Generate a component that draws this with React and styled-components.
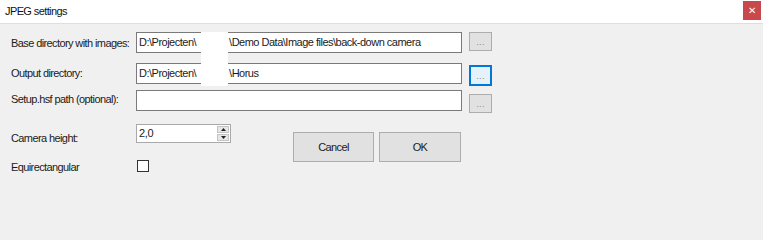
import React from "react";
import styled, { createGlobalStyle } from "styled-components";

const GlobalStyle = createGlobalStyle`
  html, body {
    margin: 0;
    padding: 0;
    background: #f0f0f0;
  }
  body {
    font-family: "Liberation Sans", Arial, sans-serif;
    font-size: 11px;
    letter-spacing: -0.6px;
    color: #1b1b1b;
  }
`;

const Window = styled.div`
  position: relative;
  width: 763px;
  height: 217px;
  background: #f0f0f0;
  overflow: hidden;
`;

const TitleBar = styled.div`
  box-sizing: border-box;
  height: 24px;
  background: #fff;
  border-bottom: 1px solid #dedede;
  display: flex;
  align-items: center;
  justify-content: space-between;
  padding: 0 2px 2px 5px;
`;

const TitleText = styled.span`
  color: #111;
`;

const CloseButton = styled.div`
  width: 18px;
  height: 19px;
  background: #c9484b;
  color: #fff;
  font-size: 10px;
  letter-spacing: 0;
  display: flex;
  align-items: center;
  justify-content: center;
`;

const Form = styled.div`
  padding-left: 11px;
`;

const FieldRow = styled.div`
  display: grid;
  grid-template-columns: 125px 326px 30px;
  grid-template-rows: 21px;
  align-items: start;
  margin-top: ${(p) => p.$top}px;
`;

const Label = styled.label`
  line-height: 14px;
  padding-top: ${(p) => p.$pt || 0}px;
  white-space: nowrap;
`;

const TextBox = styled.div`
  box-sizing: border-box;
  height: 21px;
  background: #fff;
  border: 1px solid #7a7a7a;
  padding: 0 2px;
  line-height: 19px;
  letter-spacing: -0.5px;
  white-space: nowrap;
  overflow: hidden;
`;

const Hidden = styled.span`
  display: inline-block;
  width: ${(p) => p.$w}px;
`;

const BrowseButton = styled.div`
  box-sizing: border-box;
  margin: ${(p) => p.$offset || 0}px 0 0 7px;
  height: ${(p) => (p.$focused ? 21 : 19)}px;
  background: ${(p) => (p.$focused ? "#e5f1fb" : "#e1e1e1")};
  border: ${(p) => (p.$focused ? "2px solid #0078d7" : "1px solid #adadad")};
  color: #8a8a8a;
  font-size: 9px;
  letter-spacing: 0.3px;
  display: flex;
  align-items: flex-end;
  justify-content: center;
  padding-bottom: 3px;
`;

const Bottom = styled.div`
  display: flex;
  margin-top: 13px;
`;

const OptionsGrid = styled.div`
  display: grid;
  grid-template-columns: 125px 95px;
  grid-template-rows: 19px 12px;
  row-gap: 17px;
  width: 282px;
`;

const SpinBox = styled.div`
  box-sizing: border-box;
  height: 19px;
  background: #fff;
  border: 1px solid #a9a9a9;
  display: flex;
`;

const SpinValue = styled.div`
  flex: 1;
  padding: 2px 2px 0;
  line-height: 12px;
  letter-spacing: -0.3px;
`;

const SpinArrows = styled.div`
  width: 12px;
  display: flex;
  flex-direction: column;
  gap: 1px;
  padding: 1px 1px 1px 0;
`;

const SpinArrow = styled.div`
  flex: 1;
  background: #e6e6e6;
  border: 1px solid #c4c4c4;
  display: flex;
  align-items: center;
  justify-content: center;
`;

const CheckBox = styled.div`
  box-sizing: border-box;
  width: 12px;
  height: 12px;
  margin-left: 1px;
  background: #fff;
  border: 1px solid #333;
`;

const Buttons = styled.div`
  display: flex;
  gap: 5px;
  margin-top: 8px;
`;

const DialogButton = styled.div`
  box-sizing: border-box;
  width: ${(p) => p.$w}px;
  height: 30px;
  background: #e1e1e1;
  border: 1px solid #adadad;
  display: flex;
  align-items: center;
  justify-content: center;
`;

const Redaction = styled.div`
  position: absolute;
  left: 201px;
  top: 32px;
  width: 27px;
  height: 54px;
  background: #fff;
`;

const Arrow = ({ up }) => (
  <svg width="5" height="3" viewBox="0 0 5 3">
    <path d={up ? "M0 3 L2.5 0 L5 3 Z" : "M0 0 L2.5 3 L5 0 Z"} fill="#222" />
  </svg>
);

export default function App() {
  return (
    <Window>
      <GlobalStyle />
      <TitleBar>
        <TitleText>JPEG settings</TitleText>
        <CloseButton>✕</CloseButton>
      </TitleBar>
      <Form>
        <FieldRow $top={8}>
          <Label $pt={4}>Base directory with images:</Label>
          <TextBox>
            D:\Projecten\<Hidden $w={33} />\Demo Data\Image files\back-down camera
          </TextBox>
          <BrowseButton>...</BrowseButton>
        </FieldRow>
        <FieldRow $top={10}>
          <Label $pt={3}>Output directory:</Label>
          <TextBox>
            D:\Projecten\<Hidden $w={33} />\Horus
          </TextBox>
          <BrowseButton $focused $offset={2}>...</BrowseButton>
        </FieldRow>
        <FieldRow $top={6}>
          <Label $pt={2}>Setup.hsf path (optional):</Label>
          <TextBox />
          <BrowseButton $offset={4}>...</BrowseButton>
        </FieldRow>
        <Bottom>
          <OptionsGrid>
            <Label $pt={7}>Camera height:</Label>
            <SpinBox>
              <SpinValue>2,0</SpinValue>
              <SpinArrows>
                <SpinArrow><Arrow up /></SpinArrow>
                <SpinArrow><Arrow /></SpinArrow>
              </SpinArrows>
            </SpinBox>
            <Label $pt={0}>Equirectangular</Label>
            <CheckBox />
          </OptionsGrid>
          <Buttons>
            <DialogButton $w={81}>Cancel</DialogButton>
            <DialogButton $w={82}>OK</DialogButton>
          </Buttons>
        </Bottom>
      </Form>
      <Redaction />
    </Window>
  );
}
